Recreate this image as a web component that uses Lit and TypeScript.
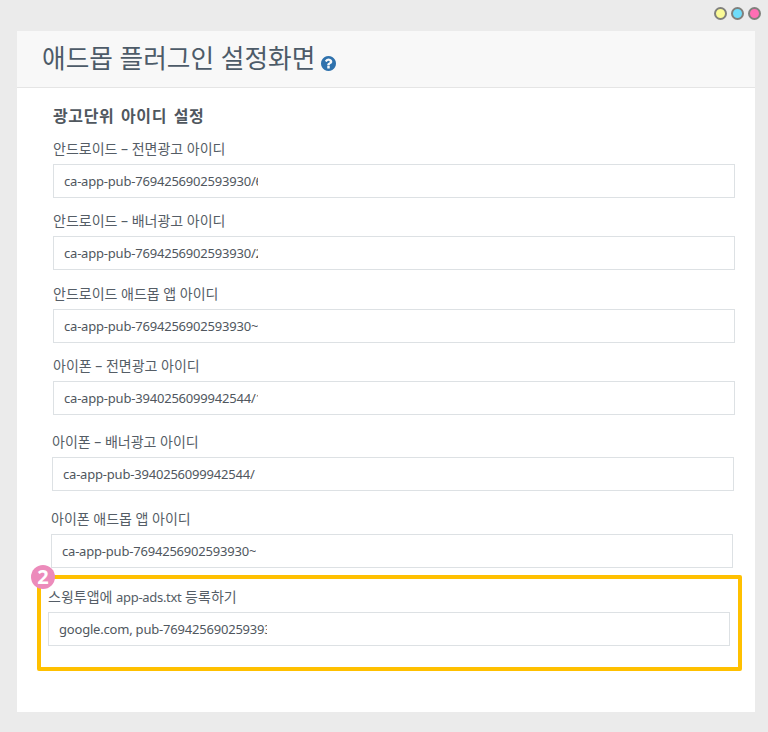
import { LitElement, html, css } from "lit";
import { customElement } from "lit/decorators.js";

interface Field {
  label: string;
  value: string;
  indent: number;
  top: number;
}

const FIELDS: Field[] = [
  { label: "안드로이드 – 전면광고 아이디", value: "ca-app-pub-7694256902593930/6123456789", indent: 36, top: 0 },
  { label: "안드로이드 – 배너광고 아이디", value: "ca-app-pub-7694256902593930/2123456789", indent: 36, top: 0 },
  { label: "안드로이드 애드몹 앱 아이디", value: "ca-app-pub-7694256902593930~1234567890", indent: 36, top: 1 },
  { label: "아이폰 – 전면광고 아이디", value: "ca-app-pub-3940256099942544/1033173712", indent: 36, top: 0 },
  { label: "아이폰 – 배너광고 아이디", value: "ca-app-pub-3940256099942544/", indent: 35, top: 4 },
  { label: "아이폰 애드몹 앱 아이디", value: "ca-app-pub-7694256902593930~1234567890", indent: 34, top: 5 },
];

const INPUT_WIDTH = 682;

@customElement("app-root")
export class AppRoot extends LitElement {
  static styles = css`
    :host {
      display: block;
      width: 768px;
      height: 732px;
      overflow: hidden;
      background: #ebebeb;
      font-family: "Noto Sans", "Noto Sans CJK KR", sans-serif;
      color: #555d66;
    }
    .dots {
      display: flex;
      justify-content: flex-end;
      gap: 4px;
      height: 20px;
      padding: 7px 7px 4px 0;
    }
    .dot {
      width: 9px;
      height: 9px;
      border-radius: 50%;
      border: 2px solid #80807c;
    }
    .y { background: #fafa96; }
    .b { background: #6fdcfa; }
    .p { background: #ff6eb4; }
    .card {
      margin: 0 13px 0 17px;
      height: 681px;
      background: #fff;
    }
    .head {
      height: 57px;
      box-sizing: border-box;
      background: #f8f8f8;
      border-bottom: 1px solid #e5e5e5;
      padding-left: 25px;
      display: flex;
      align-items: center;
      gap: 6px;
    }
    h1 {
      margin: 0;
      font-size: 25.7px;
      font-weight: 400;
      line-height: 56px;
      color: #4d5b68;
    }
    .help { width: 15px; height: 15px; fill: #2f72ad; margin-top: 8px; }
    h2 {
      margin: 0;
      padding: 18px 0 0 36px;
      font-size: 16px;
      font-weight: 700;
      line-height: 20px;
      letter-spacing: 0.6px;
      word-spacing: 2px;
      color: #50575e;
    }
    .label {
      display: block;
      font-size: 14px;
      line-height: 18px;
      height: 18px;
      margin-bottom: 6px;
    }
    .lat { font-size: 13px; letter-spacing: -0.3px; }
    .input {
      display: block;
      width: 682px;
      height: 34px;
      box-sizing: border-box;
      border: 1px solid #dde1e4;
      background: #fff;
      padding: 0 10px;
      font: inherit;
      font-size: 13px;
      letter-spacing: -0.2px;
      color: #50575e;
      outline: none;
    }
    .fields { padding-top: 14px; }
    .field + .field { margin-top: 14px; }
    .mark {
      position: relative;
      box-sizing: border-box;
      width: 705px;
      height: 96px;
      margin: 7px 0 0 20px;
      border: 4px solid #ffc000;
      border-radius: 2px;
      padding: 9px 0 0 7px;
    }
    .badge {
      position: absolute;
      left: -10px;
      top: -14px;
      width: 24px;
      height: 24px;
      border-radius: 50%;
      background: #ec8bbb;
      color: #fff;
      font-size: 20px;
      font-weight: 700;
      line-height: 24px;
      text-align: center;
    }
  `;

  private renderInput(value: string, clip: number) {
    return html`<input
      class="input"
      readonly
      .value=${value}
      style="padding-right:${INPUT_WIDTH - 10 - clip}px"
    />`;
  }

  render() {
    return html`
      <div class="dots">
        <span class="dot y"></span><span class="dot b"></span><span class="dot p"></span>
      </div>
      <div class="card">
        <div class="head">
          <h1>애드몹 플러그인 설정화면</h1>
          <svg class="help" viewBox="128 128 1536 1536">
            <path
              d="M1024 1376v-192q0-14-9-23t-23-9h-192q-14 0-23 9t-9 23v192q0 14 9 23t23 9h192q14 0 23-9t9-23zm256-672q0-88-55.5-163t-138.5-116-170-41q-243 0-371 213-15 24 8 42l132 100q7 6 19 6 16 0 25-12 53-68 86-92 34-24 86-24 48 0 85.5 26t37.5 59q0 38-20 61t-68 45q-63 28-115.5 86.5t-52.5 125.5v36q0 14 9 23t23 9h192q14 0 23-9t9-23q0-19 21.5-49.5t54.5-49.5q32-18 49-28.5t46-35 44.5-48 28-60.5 12.5-81zm384 192q0 209-103 385.5t-279.5 279.5-385.5 103-385.5-103-279.5-279.5-103-385.5 103-385.5 279.5-279.5 385.5-103 385.5 103 279.5 279.5 103 385.5z"
            />
          </svg>
        </div>
        <h2>광고단위 아이디 설정</h2>
        <div class="fields">
          ${FIELDS.map(
            (f) => html`<div
              class="field"
              style="margin-left:${f.indent}px;padding-top:${f.top}px"
            >
              <span class="label">${f.label}</span>
              ${this.renderInput(f.value, 196)}
            </div>`
          )}
        </div>
        <div class="mark">
          <span class="badge">2</span>
          <span class="label">스윙투앱에 <span class="lat">app-ads.txt</span> 등록하기</span>
          ${this.renderInput("google.com, pub-7694256902593930, DIRECT", 210)}
        </div>
      </div>
    `;
  }
}
